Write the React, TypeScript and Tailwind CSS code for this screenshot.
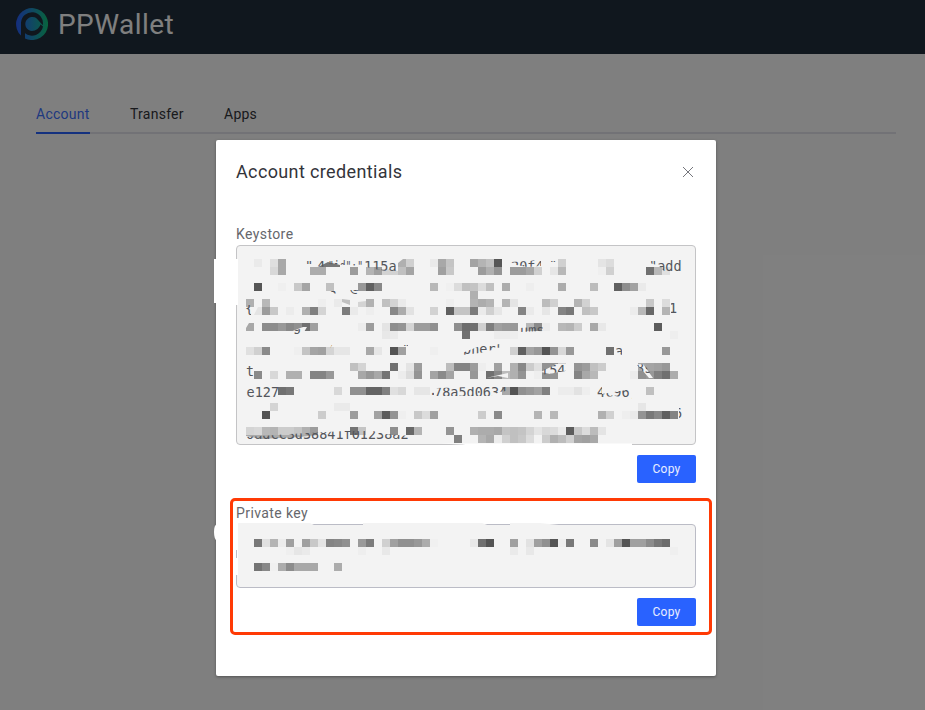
import React from 'react';

const CELL = 8;
const ORIGIN_X = 246;
const ORIGIN_Y = 259;

// Each entry: row, then runs of "column:shade,shade,..." in 8px cells.
const KEYSTORE_CELLS: [number, string][] = [
  [0, '1:ea 3:df,a8 20:d0 23:ea,a8,c4 28:a4,b4,c0,56 39:d0 44:e4,dc'],
  [1, '3:d8,a8 8:ac,ac 13:9c 15:b4,a0 19:c0,a4 24:a0,c8 29:9c,b0,94 33:9c,9c,a8,d0 38:e6,b8 44:ef,d0 50:70,b8,e0'],
  [3, '1:56 4:ef 6:c8,a4 10:c0 14:98,60,88 23:b8 25:f0,dc,c0,c4,dc,c0 32:ac 35:ee 39:ac 43:bc 46:60,8e,a2,ea'],
  [4, '28:b0'],
  [5, '0:b0 2:b8 9:ee 11:ea 15:b2 17:c0,d4,ea 25:ee 28:b4,ac,b4 32:b4,e4 37:bc,d0 41:b4,d2 50:c8 52:dc'],
  [6, '2:9c,c8 5:ec 7:b0,80,d4 12:7c,ea 15:ee 18:88,ac,e2 23:d2 25:60,c4,c4,7c,ea,d0,e6 34:84,ea 37:e6 39:84,78 42:c0,c8 48:ec,b8,68 52:b4'],
  [8, '2:8c,8c,98,88,90,70,a0 14:ec,9c 17:e4,8e,94,d4,9c,9c,90 26:8e,6c,70,d0,7e,a0,9a,98 35:b8,8a,ec 39:b8,b4,cc 43:a8,e8 51:5c'],
  [9, '17:e8,ea 27:70 31:ec,ec,ee 53:ee'],
  [11, '0:e0,d0,8a 6:ef,c4,a4,a0,d4,e6,e6 15:a8,e6 18:54,a0 23:ef 33:d0,60,a4,98,54,94,d8,98 45:70 52:98'],
  [13, '13:c0,d4 18:70 20:e4,9c 25:bc,84,84,9c,ee 31:a0 33:b0,88,cc,e0,92,94,d0 41:94,9c,c0,cc 49:a8,a4,a0,98'],
  [14, '1:8a 3:d8 5:b0,b0 8:84,84,98 14:a8,98,a8,74 19:ec,dc,94 23:a4,8a,a4 28:98 30:70,88,bc,b0,94 36:ee,90,94 41:84,a8,b8 48:ec,90,98,80,70,ac'],
  [16, '4:70,78 11:d8 13:90,90,64,64,80,e0,d8 21:e6,e6 32:a8,54,90,98,a2,80 39:ec,ec,e2,ee 50:c0'],
  [18, '3:d4 11:ea,ea 49:e6'],
  [19, '2:54 9:cc 13:9c 16:a2,5c,94,ef 21:c8,dc,a0 29:cc 31:8a 36:b4 38:b8 44:b0,d0 47:ee,ea,94,78,88,60,84'],
  [21, '0:d4,d8,b8,b4,cc,cc,c4,b0,9c 13:74,c4 18:8e 20:68,b4 25:94 28:b0,ac,ac,a8,c4,c0,c4,d4,e4,d8,dc,ea,5c,c8,dc,bc,e4'],
  [22, '26:80 29:b4,a8,ec,d0,c0,c8,dc 37:cc,b0,bc,d0,a4,a0,a8'],
];

const PRIVATE_KEY_CELLS: [number, string][] = [
  [35, '1:78,e0,b4,ec,a0 7:a0,c8,e4,84,88,90 14:9a,7c 17:d0,a0,90,90,98,ac,f0 28:e8,70,54 33:a0 35:e2,a0,90,54,ee,78 43:8a 45:e4,a0,54,a0,a0,8c,78,6c'],
  [36, '5:ef,e6,ea 14:ee 17:e8 33:ea 35:e8 53:ef'],
  [38, '1:74,88,f0,ac,8c,a8,a8,a8 11:ac'],
];

function Mosaic({ rows }: { rows: [number, string][] }) {
  return (
    <g shapeRendering="crispEdges">
      {rows.flatMap(([row, runs]) =>
        runs.split(' ').flatMap((run) => {
          const [start, shades] = run.split(':');
          return shades.split(',').map((s, k) => (
            <rect
              key={`${row}-${start}-${k}`}
              x={ORIGIN_X + (Number(start) + k) * CELL}
              y={ORIGIN_Y + row * CELL}
              width={CELL}
              height={row === 22 ? 7.5 : CELL}
              fill={`#${s}${s}${s}`}
            />
          ));
        }),
      )}
    </g>
  );
}

type Fragment = { x: number; y: number; text: string; clip: string; width?: number };

// Readable remains of the keystore JSON, each one cut by the eraser strokes.
const FRAGMENTS: Fragment[] = [
  { x: 305, y: 271, text: '"', clip: '305,258 313,258 313,264 305,264' },
  { x: 317, y: 271, text: '4', clip: '316,261 326,260 326,267 316,266' },
  { x: 328, y: 271, text: '"id":"', clip: '327,260 363,259 363,266 346,265 327,264', width: 35 },
  { x: 364, y: 271, text: '115ac', clip: '363,259 400,260 396,265 397,272 386,271 374,269 363,266' },
  { x: 511, y: 271, text: '20f4', clip: '511,262 541,260 541,266 527,267 511,264' },
  { x: 549, y: 271, text: '":', clip: '550,259 566,259 566,262 550,262' },
  { x: 649, y: 271, text: '"add', clip: '650,258 684,258 684,273 666,273 659,266 650,263' },
  { x: 329, y: 292, text: 'Q', clip: '329,291 337,291 337,296 329,296' },
  { x: 350, y: 292, text: '@', clip: '350,290 360,290 360,296 350,296' },
  { x: 245, y: 313, text: '{', clip: '245,305 251,305 251,318 245,318' },
  { x: 669, y: 313, text: '1', clip: '671,300 680,300 680,315 671,315' },
  { x: 293, y: 331, text: 'g', clip: '290,331 306,328 304,340 290,339' },
  { x: 520, y: 335, text: 'ums', clip: '520,328 534,327 543,324 543,331 520,332' },
  { x: 326, y: 355, text: '/', clip: '326,344 333,344 330,348 326,348' },
  { x: 402, y: 355, text: '"', clip: '402,344 408,344 408,346 402,346' },
  { x: 463, y: 354, text: 'pher"', clip: '462,353 480,346 500,344 500,348 480,353 462,355' },
  { x: 615, y: 356, text: 'a', clip: '616,348 622,348 622,355 618,353 616,350' },
  { x: 246, y: 376, text: 't', clip: '246,364 252,366 256,378 246,378' },
  { x: 541, y: 375, text: 'f54', clip: '541,371 557,364 571,364 566,371 541,375' },
  { x: 636, y: 373, text: '8s', clip: '637,365 644,364 654,378 650,379' },
  { x: 246.5, y: 397, text: 'e127', clip: '246,385 281,385 276,399 246,399' },
  { x: 434, y: 397, text: '78a5d0634', clip: '433,396 437,388 510,386 506,391 500,392 490,396' },
  { x: 429, y: 395, text: '.', clip: '428,392 434,391 434,396 428,396' },
  { x: 597, y: 397, text: '4c96,', clip: '597,388 602,387 602,394 632,389 632,399 615,396 597,398' },
  { x: 674, y: 418, text: '6', clip: '679,406 683,410 682,420 679,420' },
  { x: 246, y: 439, text: '0adcc3d38841f01238a2', clip: '246,437 290,434 345,431 373,431 385,434 412,436 415,441 246,441' },
];

function Redaction() {
  return (
    <svg
      className="pointer-events-none absolute inset-0"
      width="925"
      height="710"
      viewBox="0 0 925 710"
      aria-hidden="true"
    >
      <path d="M214 259H238V305H236L216 303H214Z" fill="#fff" />
      <path d="M440 443.5H632V446H472L462 444.5Z" fill="#fff" />
      <path d="M217 524Q214 525 214 532Q214 539 217 541Z" fill="#fff" />
      <path d="M235 524H238V575H235Z" fill="#fff" />
      <path d="M236.5 550V558" stroke="#bbbcc6" />
      <path d="M238 523H310L316 526H238ZM363 523H482L490 526H363ZM510 523H540L568 526H510Z" fill="#f3f3f3" />
      <Mosaic rows={KEYSTORE_CELLS} />
      <path d="M246 331V328L249 323H254V331Z" fill="#a8a8a8" />
      <path d="M254 315L258 307H262V315Z" fill="#e4e4e4" />
      <path d="M398 267V263L403 259H406V267Z" fill="#b0b0b0" />
      <path d="M318 267L328 262L340 265V267Z" fill="#777" />
      <path d="M342 299L350 300V305L342 302Z" fill="#c0c0c0" />
      <path d="M358 302L366 301V307H358Z" fill="#d4d4d4" />
      <path d="M382 275V270L390 269L398 271V275Z" fill="#d2d2d2" />
      <path d="M246 435H318L300 437L262 439L246 436Z" fill="#aaa" />
      <path d="M290 332L303 327H307L304 332Z" fill="#f3f3f3" />
      <path d="M486 378L508 373V378L498 376Z" fill="#f3f3f3" />
      <path d="M541 372L556 364H571L567 370L550 374Z" fill="#f3f3f3" />
      <path d="M637 364H643L653 378H649Z" fill="#f3f3f3" />
      {FRAGMENTS.map((f, i) => (
        <g key={i}>
          <clipPath id={`cut-${i}`}>
            <polygon points={f.clip} />
          </clipPath>
          <g clipPath={`url(#cut-${i})`}>
            <text
              x={f.x}
              y={f.y}
              textLength={f.width}
              lengthAdjust="spacingAndGlyphs"
              className="font-['DejaVu_Sans_Mono',monospace] text-[13.5px]"
              fill="#54565b"
            >
              {f.text}
            </text>
          </g>
        </g>
      ))}
      <Mosaic rows={PRIVATE_KEY_CELLS} />
    </svg>
  );
}

function Logo() {
  return (
    <svg className="block" width="32" height="32" viewBox="0 0 32 32" aria-hidden="true">
      <defs>
        <linearGradient id="logo" x1="0" y1="0" x2="32" y2="0" gradientUnits="userSpaceOnUse">
          <stop offset="0" stopColor="#2a5cff" />
          <stop offset="0.5" stopColor="#2090c4" />
          <stop offset="1" stopColor="#10c97c" />
        </linearGradient>
      </defs>
      <path
        d="M5 27.6A16 16 0 1 1 9 30.4V25.3A11.2 11.2 0 0 0 27 18.4L24.6 16.4Q22 22.8 16 23A7 7 0 1 1 21.4 11.2L26.8 17.2A11 11 0 1 0 5 14.5Z"
        fill="url(#logo)"
      />
    </svg>
  );
}

function CopyButton() {
  return (
    <button className="h-7 w-[59px] rounded-[2px] bg-[#2962ff] text-xs tracking-[0.2px] text-white/90">Copy</button>
  );
}

export default function App() {
  return (
    <div className="relative h-[710px] w-[925px] overflow-hidden bg-white font-[Roboto,sans-serif] text-[#33343a]">
      <header className="flex h-[54px] items-start gap-2.5 bg-[#202f3d] pl-4 pt-2">
        <Logo />
        <span className="pt-px text-[28px] leading-8 tracking-[0.45px] text-white">PPWallet</span>
      </header>
      <nav className="mx-9 mr-[29px] mt-[42px] flex h-[38px] gap-10 border-b-2 border-[#e4e4ec] text-sm leading-9 tracking-[0.25px]">
        <a className="h-[38px] w-[54px] whitespace-nowrap border-b-2 border-[#2962ff] text-[#3f72ff]">Account</a>
        <a className="w-[54px]">Transfer</a>
        <a>Apps</a>
      </nav>

      <div className="absolute inset-0 bg-black/50">
        <section className="ml-[216px] mt-[140px] h-[536px] w-[500px] rounded-[2px] bg-white px-5 shadow-[0_1px_3px_rgba(0,0,0,0.35)]">
          <div className="flex h-16 items-center justify-between pr-0.5">
            <h1 className="text-[18px] leading-6 tracking-[0.37px]">Account credentials</h1>
            <svg width="12" height="12" viewBox="0 0 12 12" aria-label="Close">
              <path d="M1 1L11 11M11 1L1 11" stroke="#75767c" strokeWidth="1" />
            </svg>
          </div>
          <label className="mt-5 block h-[21px] text-sm leading-5 tracking-[0.4px] text-[#66676c]">Keystore</label>
          <div className="h-[200px] rounded border border-[#c4c4c6] bg-[#f3f3f3]" />
          <div className="mt-2.5 flex justify-end">
            <CopyButton />
          </div>
          <label className="mt-5 block h-[21px] text-sm leading-5 tracking-[0.4px] text-[#66676c]">Private key</label>
          <div className="h-16 rounded border border-[#bbbcc6] bg-[#f3f3f3]" />
          <div className="mt-2.5 flex justify-end">
            <CopyButton />
          </div>
        </section>
      </div>
      <Redaction />
      <div className="pointer-events-none absolute left-[229.5px] top-[498px] h-[137px] w-[482px] rounded-[5px] border-[3px] border-[#ff3a05]" />
    </div>
  );
}
